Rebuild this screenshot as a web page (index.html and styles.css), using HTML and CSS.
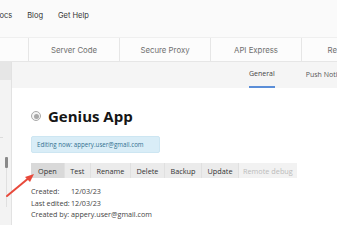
FILE: index.html
```html
<!DOCTYPE html>
<html>
<head>
<meta charset="utf-8">
<link rel="stylesheet" href="styles.css">
</head>
<body>
<div class="page">
  <header class="topbar">
    <nav class="topnav">
      <a class="nav-item">Docs</a>
      <a class="nav-item">Blog</a>
      <a class="nav-item">Get Help</a>
    </nav>
  </header>
  <div class="tabs">
    <div class="tab">Services</div>
    <div class="tab">Server Code</div>
    <div class="tab">Secure Proxy</div>
    <div class="tab">API Express</div>
    <div class="tab">Resources</div>
  </div>
  <div class="main">
    <aside class="sidebar">
      <div class="side-head"></div>
      <div class="side-body">
        <div class="side-line"></div>
        <div class="scroll-track"><div class="scroll-thumb"></div></div>
      </div>
    </aside>
    <section class="content">
      <div class="subtabs">
        <div class="subtab active">General</div>
        <div class="subtab">Push Notifications</div>
      </div>
      <div class="panel">
        <h1 class="app-title">
          <span class="radio"><span class="radio-dot"></span></span>
          Genius App
        </h1>
        <div class="info">Editing now: appery.user@gmail.com</div>
        <div class="btn-group">
          <button class="btn active">Open</button>
          <button class="btn">Test</button>
          <button class="btn">Rename</button>
          <button class="btn">Delete</button>
          <button class="btn">Backup</button>
          <button class="btn">Update</button>
          <button class="btn disabled">Remote debug</button>
        </div>
        <div class="meta">
          <span>Created:</span><span>12/03/23</span>
          <span>Last edited:</span><span>12/03/23</span>
          <span>Created by:</span><span>appery.user@gmail.com</span>
        </div>
      </div>
    </section>
  </div>
  <svg class="arrow" width="40" height="30" viewBox="0 0 40 30">
    <line x1="7" y1="26" x2="30" y2="7" stroke="#e8493b" stroke-width="2" stroke-linecap="round"/>
    <polygon points="34,4 25,7 30,12" fill="#e8493b"/>
  </svg>
</div>
</body>
</html>
```
FILE: styles.css
```css
html, body {
  margin: 0;
  padding: 0;
  background: #ffffff;
}
.page {
  position: relative;
  width: 337px;
  height: 225px;
  overflow: hidden;
  font-family: "Open Sans", "Noto Sans", sans-serif;
}
.topbar {
  height: 37px;
  background: #fafafa;
  border-bottom: 1px solid #efefef;
  display: flex;
  align-items: center;
}
.topnav {
  display: flex;
  gap: 15px;
  margin-left: -6px;
  font-family: "Inter", "Noto Sans", sans-serif;
  font-size: 7.5px;
  color: #333;
  padding-bottom: 7px;
}
.tabs {
  display: flex;
  height: 23px;
  background: #fcfcfc;
  border-bottom: 1px solid #e6e6e6;
  margin-left: -62px;
}
.tab {
  flex: 0 0 90px;
  border-right: 1px solid #e6e6e6;
  display: flex;
  align-items: center;
  justify-content: center;
  font-family: "Inter", "Noto Sans", sans-serif;
  font-size: 7.8px;
  color: #707070;
}
.main {
  display: flex;
  height: 163px;
}
.sidebar {
  width: 11px;
  flex: 0 0 11px;
  display: flex;
  flex-direction: column;
  border-right: 1px solid #e2e2e2;
  background: #f3f3f3;
}
.side-head {
  height: 18px;
  background: #e6e6e6;
}
.side-body {
  flex: 1;
  position: relative;
}
.side-line {
  position: absolute;
  left: 0;
  top: 57px;
  width: 3px;
  border-top: 1px solid #dcdcdc;
}
.scroll-track {
  position: absolute;
  left: 6px;
  top: 77px;
  width: 1px;
  height: 50px;
  background: #e0e0e0;
}
.scroll-thumb {
  position: absolute;
  left: -1px;
  top: 0;
  width: 3px;
  height: 11px;
  background: #8a8a8a;
  border-radius: 1px;
}
.content {
  flex: 1;
  display: flex;
  flex-direction: column;
}
.subtabs {
  height: 26px;
  background: #f5f5f5;
  display: flex;
  gap: 31px;
  padding-left: 237px;
  white-space: nowrap;
}
.subtab {
  display: flex;
  align-items: center;
  font-size: 7px;
  color: #555;
  height: 26px;
  box-sizing: border-box;
  padding-bottom: 2px;
}
.subtab.active {
  color: #444;
  border-bottom: 2px solid #5b8ed8;
  padding-top: 1px;
}
.panel {
  padding: 18px 0 0 19px;
}
.app-title {
  display: flex;
  align-items: center;
  gap: 7px;
  margin: 0;
  font-size: 15px;
  font-weight: 700;
  color: #151515;
  line-height: 20px;
}
.radio {
  width: 10px;
  height: 10px;
  border: 1px solid #aaa;
  border-radius: 50%;
  box-sizing: border-box;
  display: flex;
  align-items: center;
  justify-content: center;
  background: #f4f4f4;
}
.radio-dot {
  width: 5px;
  height: 5px;
  border-radius: 50%;
  background: #a8a8a8;
}
.info {
  margin-top: 10px;
  width: 129px;
  height: 17px;
  box-sizing: border-box;
  background: #d9edf7;
  border: 1px solid #cde6f2;
  border-radius: 2px;
  color: #31708f;
  font-size: 6.2px;
  display: flex;
  align-items: center;
  padding-left: 5px;
  white-space: nowrap;
}
.btn-group {
  display: flex;
  margin-top: 10px;
}
.btn {
  border: none;
  border-right: 1px solid #e0e0e0;
  background: #ebebeb;
  font-family: "Open Sans", "Noto Sans", sans-serif;
  font-size: 7.3px;
  color: #333;
  height: 15px;
  padding: 0 5.5px;
  margin: 0;
}
.btn.active {
  background: #d9d9d9;
  padding: 0 7px;
}
.btn.disabled {
  background: #f2f2f2;
  color: #bbb;
  border-right: none;
  padding: 0 4px;
}
.meta {
  margin-top: 8px;
  font-size: 7.2px;
  color: #444;
  line-height: 11.5px;
  display: grid;
  grid-template-columns: 40px auto;
  justify-content: start;
}
.arrow {
  position: absolute;
  left: 0;
  top: 170px;
}
```
